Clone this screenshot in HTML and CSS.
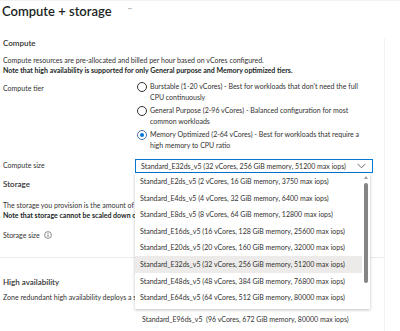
FILE: index.html
```html
<!DOCTYPE html>
<html lang="en">
    <head>
        <meta charset="UTF-8" />
        <title>Compute + storage</title>
        <link rel="stylesheet" href="styles.css">
    </head>
    <body>
        <div class="page">
            <div class="title-bar">
                <h1>Compute + storage</h1>
                <span class="more">&middot;&middot;&middot;</span>
            </div>

            <div class="content">
                <h2>Compute</h2>
                <p class="desc">
                    Compute resources are pre-allocated and billed per hour based on vCores configured.<br>
                    <b>Note that high availability is supported for only General purpose and Memory optimized tiers.</b>
                </p>

                <div class="row tier-row">
                    <div class="label">Compute tier</div>
                    <div class="radio-group">
                        <div class="radio">
                            <span class="circle"></span>
                            <span class="radio-text">Burstable (1-20 vCores) - Best for workloads that don't need the full CPU continuously</span>
                        </div>
                        <div class="radio">
                            <span class="circle"></span>
                            <span class="radio-text">General Purpose (2-96 vCores) - Balanced configuration for most common workloads</span>
                        </div>
                        <div class="radio">
                            <span class="circle checked"></span>
                            <span class="radio-text">Memory Optimized (2-64 vCores) - Best for workloads that require a high memory to CPU ratio</span>
                        </div>
                    </div>
                </div>

                <div class="row size-row">
                    <div class="label">Compute size</div>
                    <div class="select-wrap">
                        <div class="select">
                            <span>Standard_E32ds_v5 (32 vCores, 256 GiB memory, 51200 max iops)</span>
                            <svg class="chevron" width="9" height="6" viewBox="0 0 9 6"><polyline points="0.5,0.8 4.5,4.8 8.5,0.8" fill="none" stroke="#605e5c" stroke-width="0.9"/></svg>
                        </div>
                        <div class="dropdown">
                            <ul class="options">
                                <li>Standard_E2ds_v5 (2 vCores, 16 GiB memory, 3750 max iops)</li>
                                <li>Standard_E4ds_v5 (4 vCores, 32 GiB memory, 6400 max iops)</li>
                                <li>Standard_E8ds_v5 (8 vCores, 64 GiB memory, 12800 max iops)</li>
                                <li>Standard_E16ds_v5 (16 vCores, 128 GiB memory, 25600 max iops)</li>
                                <li>Standard_E20ds_v5 (20 vCores, 160 GiB memory, 32000 max iops)</li>
                                <li class="active">Standard_E32ds_v5 (32 vCores, 256 GiB memory, 51200 max iops)</li>
                                <li>Standard_E48ds_v5 (48 vCores, 384 GiB memory, 76800 max iops)</li>
                                <li>Standard_E64ds_v5 (64 vCores, 512 GiB memory, 80000 max iops)</li>
                            </ul>
                            <div class="scrollbar">
                                <span class="arrow"></span>
                                <span class="thumb"></span>
                            </div>
                        </div>
                        <div class="extra-option">Standard_E96ds_v5&nbsp; (96 vCores, 672 GiB memory, 80000 max iops)</div>
                    </div>
                </div>

                <h2 class="storage-head">Storage</h2>
                <p class="desc storage-desc">
                    The storage you provision is the amount of storage capacity available to your server.<br>
                    <b>Note that storage cannot be scaled down once the server is created.</b>
                </p>

                <div class="row storage-row">
                    <div class="label">
                        Storage size
                        <svg class="info" width="8" height="8" viewBox="0 0 8 8"><circle cx="4" cy="4" r="3.4" fill="none" stroke="#605e5c" stroke-width="0.7"/><line x1="4" y1="3.4" x2="4" y2="6" stroke="#605e5c" stroke-width="0.8"/><circle cx="4" cy="2.2" r="0.5" fill="#605e5c"/></svg>
                    </div>
                </div>

                <hr class="divider">

                <h3>High availability</h3>
                <p class="ha-text">Zone redundant high availability deploys a standby replica in a different zone.</p>
            </div>
        </div>
    </body>
</html>
```

FILE: styles.css
```css
body {
    margin: 0;
    font-family: "Segoe UI", Lato, "Open Sans", sans-serif;
    font-size: 7px;
    color: #323130;
    background: #fff;
}
.page {
    position: relative;
    height: 331px;
    overflow: hidden;
    border-top: 1px solid #f3f2f1;
    box-sizing: border-box;
}
.title-bar {
    display: flex;
    align-items: center;
    height: 19px;
    padding-left: 2px;
}
h1 {
    margin: 0;
    font-size: 13px;
    font-weight: 600;
    color: #201f1e;
}
.more {
    margin-left: 16px;
    margin-top: -6px;
    font-size: 7px;
    letter-spacing: -0.5px;
    color: #a19f9d;
}
.content {
    width: 385px;
    padding-left: 3px;
    border-right: 1px solid #f3f2f1;
    box-sizing: border-box;
    height: 312px;
}
h2 {
    margin: 18px 0 0;
    font-size: 8px;
    font-weight: 600;
    line-height: 10px;
}
.desc {
    margin: 7px 0 0;
    line-height: 10px;
    white-space: nowrap;
}
.desc b {
    color: #201f1e;
}
.row {
    display: flex;
}
.label {
    width: 132px;
    flex-shrink: 0;
    line-height: 11px;
}
.tier-row {
    margin-top: 6px;
}
.tier-row .label {
    padding-top: 2px;
}
.radio-group {
    display: flex;
    flex-direction: column;
    gap: 2px;
    width: 232px;
}
.radio {
    display: flex;
    gap: 3px;
    padding-left: 2px;
}
.circle {
    width: 10px;
    height: 10px;
    border: 1px solid #323130;
    border-radius: 50%;
    box-sizing: border-box;
    flex-shrink: 0;
    position: relative;
    margin-top: 1px;
}
.circle.checked {
    border-color: #4a6fa5;
}
.circle.checked::after {
    content: "";
    position: absolute;
    left: 2px;
    top: 2px;
    width: 4px;
    height: 4px;
    border-radius: 50%;
    background: #0078d4;
}
.radio-text {
    line-height: 11px;
}
.size-row {
    margin-top: 8px;
}
.size-row .label {
    padding-top: 1px;
}
.select-wrap {
    position: relative;
}
.select {
    display: flex;
    align-items: center;
    justify-content: space-between;
    width: 238px;
    height: 14px;
    padding: 0 6px 0 5px;
    border: 1px solid #0078d4;
    box-sizing: border-box;
    white-space: nowrap;
}
.chevron {
    flex-shrink: 0;
}
.dropdown {
    position: absolute;
    left: 0;
    top: 14px;
    width: 235px;
    height: 136px;
    display: flex;
    background: #fff;
    box-shadow: 0 1px 3px rgba(0, 0, 0, 0.25);
    z-index: 2;
}
.options {
    list-style: none;
    margin: 0;
    padding: 0;
    flex: 1;
}
.options li {
    height: 16.6px;
    line-height: 16.6px;
    padding-left: 5px;
    white-space: nowrap;
}
.options li.active {
    background: #edebe9;
}
.scrollbar {
    width: 8px;
    position: relative;
}
.arrow {
    position: absolute;
    left: 2px;
    top: 3px;
    border-left: 2px solid transparent;
    border-right: 2px solid transparent;
    border-bottom: 3px solid #a19f9d;
}
.thumb {
    position: absolute;
    left: 2px;
    top: 10px;
    width: 4px;
    height: 100px;
    border-radius: 2px;
    background: #858585;
}
.extra-option {
    position: absolute;
    left: 7px;
    top: 153px;
    white-space: nowrap;
    z-index: 2;
    background: #fff;
    width: 228px;
    line-height: 14px;
}
.storage-head {
    margin-top: 6px;
}
.storage-desc {
    margin-top: 11px;
}
.storage-row {
    margin-top: 10px;
}
.info {
    margin-left: 3px;
    vertical-align: -1px;
}
.divider {
    margin: 16px 0 0 -3px;
    border: 0;
    border-top: 1px solid #edebe9;
}
h3 {
    margin: 19px 0 0;
    font-size: 8px;
    font-weight: 600;
    line-height: 10px;
}
.ha-text {
    margin: 5px 0 0;
    line-height: 10px;
    white-space: nowrap;
}
```
